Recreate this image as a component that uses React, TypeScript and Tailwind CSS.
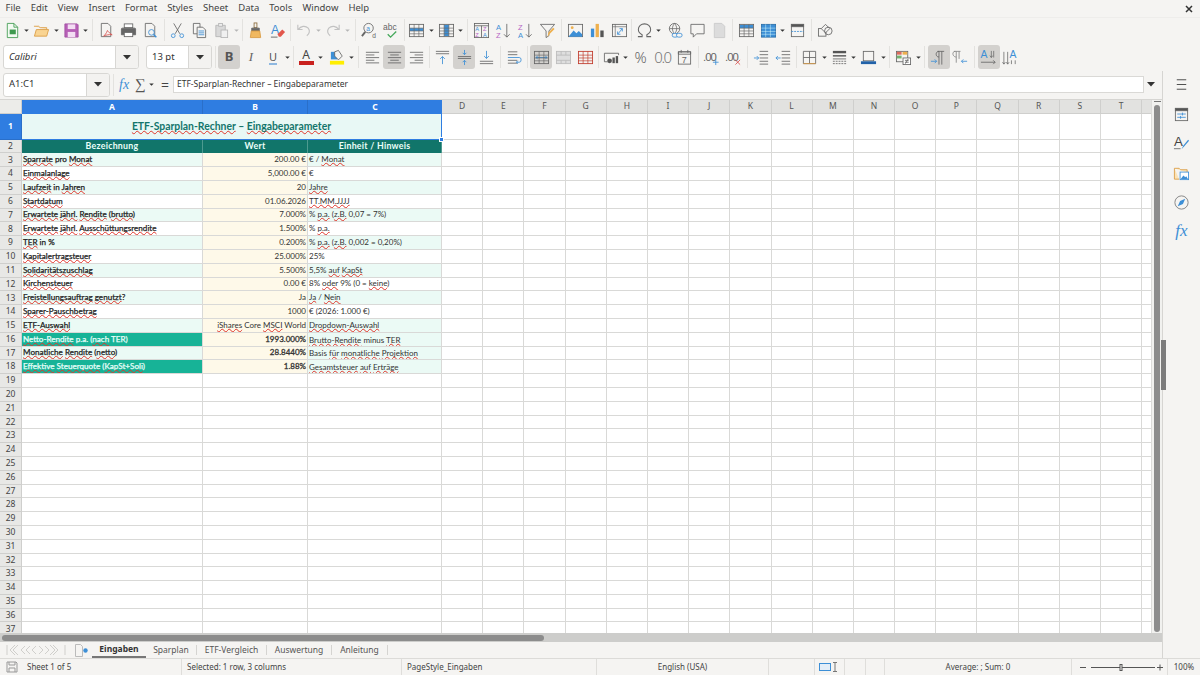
import type { ReactNode } from "react";

const BLUE = "#3d8fd6";
const GREY = "#666666";

function Ic({ children, size = 17 }: { children: ReactNode; size?: number }) {
  return (
    <svg width={size} height={size} viewBox="0 0 18 18" fill="none" stroke={GREY} strokeWidth="0.9">
      {children}
    </svg>
  );
}

function Btn({ children, active }: { children: ReactNode; active?: boolean }) {
  return (
    <div className={`flex h-[24px] w-[22px] shrink-0 items-center justify-center rounded-[3px] ${active ? "bg-[#d3d1ce]" : ""}`}>
      {children}
    </div>
  );
}

function Drop({ muted }: { muted?: boolean }) {
  return (
    <div className="flex h-[24px] w-[7.5px] shrink-0 items-center justify-center">
      <svg width="5" height="3" viewBox="0 0 6 4">
        <path d="M0 0.5h6L3 3.5z" fill={muted ? "#b5b5b5" : "#333"} />
      </svg>
    </div>
  );
}

function Sep({ w }: { w: string }) {
  return (
    <div className={`flex h-[22px] shrink-0 justify-center ${w}`}>
      <div className="h-full w-px bg-[#e3e2df]" />
    </div>
  );
}

function Combo({ text, w, italic }: { text: string; w: string; italic?: boolean }) {
  return (
    <div className={`flex h-[24px] shrink-0 overflow-hidden rounded-[3px] border border-[#d8d7d4] bg-white ${w}`}>
      <div className={`flex flex-1 items-center pl-[5px] text-[9.5px] text-[#333] ${italic ? "italic" : ""}`}>{text}</div>
      <div className="flex w-[23px] items-center justify-center border-l border-[#d8d7d4] bg-[#f3f2f0]">
        <svg width="8" height="5" viewBox="0 0 8 5">
          <path d="M0 0h8L4 4.5z" fill="#333" />
        </svg>
      </div>
    </div>
  );
}

const lines = (ys: number[], x1: number, x2: number, color = GREY) =>
  ys.map((y) => <path key={y} d={`M${x1} ${y}H${x2}`} stroke={color} />);

const Table = ({ fill, red }: { fill?: ReactNode; red?: boolean }) => {
  const c = red ? "#c0392b" : GREY;
  return (
    <Ic>
      {fill}
      <rect x="1.5" y="2.5" width="15" height="13" stroke={c} />
      <path d="M1.5 6.5h15M1.5 9.5h15M1.5 12.5h15M6.5 2.5v13M11.5 2.5v13" stroke={c} strokeWidth="0.7" />
    </Ic>
  );
};

const Toolbar1 = () => (
  <div className="flex h-[24px] items-center pl-[1px]">
    <Btn>
      <Ic>
        <path d="M3.5 1.5h7l4 4v11h-11z" stroke="#3e9a4e" fill="#f2faf2" />
        <path d="M10.5 1.5v4h4" stroke="#3e9a4e" />
        <rect x="6" y="8" width="6.5" height="5" fill="#3e9a4e" stroke="none" />
      </Ic>
    </Btn>
    <Drop />
    <Btn>
      <Ic>
        <path d="M1 4.500h5l1.500 1.500h7v2" stroke="#d99b42" fill="#fbe3b8" />
        <path d="M1.500 15l2-7h13l-2 7z" stroke="#d99b42" fill="#f9d492" />
      </Ic>
    </Btn>
    <Drop />
    <Btn>
      <Ic>
        <path d="M2 2h13l1 1v13H2z" fill="#b65fb6" stroke="#a04ea0" />
        <rect x="5" y="2.500" width="8" height="5" fill="#f3ddf3" stroke="none" />
        <rect x="5" y="10.500" width="8" height="5.500" fill="#f3ddf3" stroke="none" />
      </Ic>
    </Btn>
    <Drop />
    <Sep w="w-[6px]" />
    <Btn>
      <Ic>
        <path d="M3.500 1.500h7l3 3v11h-10z" />
        <path d="M10 9c-1 3-3 5-4 6 2-1 5-2 9-1.500-2-1-4-3-5-4.500z" stroke="#d9534f" />
      </Ic>
    </Btn>
    <Btn>
      <Ic>
        <rect x="4.500" y="2" width="9" height="4" fill="#fff" />
        <path d="M1.500 7.500q0-1 1-1h13q1 0 1 1v6h-15z" fill="#666" stroke="#666" />
        <rect x="4.500" y="11" width="9" height="4.500" fill="#fff" />
      </Ic>
    </Btn>
    <Btn>
      <Ic>
        <path d="M3.500 1.500h7l3 3v11h-10z" />
        <circle cx="10" cy="11" r="3" stroke={BLUE} />
        <path d="M12.200 13.200l3 3" stroke={BLUE} strokeWidth="1.500" />
      </Ic>
    </Btn>
    <Sep w="w-[5px]" />
    <Btn>
      <Ic>
        <path d="M5 1.500l6.500 11M13 1.500l-6.500 11" />
        <circle cx="4.500" cy="14.500" r="2" stroke={BLUE} />
        <circle cx="13.500" cy="14.500" r="2" stroke={BLUE} />
      </Ic>
    </Btn>
    <Btn>
      <Ic>
        <path d="M2.500 1.500h7v11h-7z" />
        <path d="M6.500 5.500h6l3 3v8h-9z" fill="#f5f4f2" />
        {lines([9.500, 11.500, 13.500], 8, 14, BLUE)}
      </Ic>
    </Btn>
    <Btn>
      <Ic>
        <path d="M3 3.500h10v12H3z" stroke="#b5b5b5" fill="#d9d9d9" />
        <rect x="6" y="1.500" width="4" height="3" stroke="#b5b5b5" fill="#eee" />
        <rect x="8.500" y="8.500" width="7" height="8" stroke="#b5b5b5" fill="#f0f0f0" />
      </Ic>
    </Btn>
    <Drop muted />
    <Sep w="w-[4.500px]" />
    <Btn>
      <Ic>
        <rect x="7.500" y="1" width="3" height="5" stroke="#8a6a3a" />
        <path d="M5 6.500h8v3H5z" fill="#666" stroke="#666" />
        <path d="M4.500 9.500h9l1 7h-11z" fill="#f0b860" stroke="#d99b42" />
      </Ic>
    </Btn>
    <Btn>
      <Ic>
        <text x="2" y="12.500" fontSize="13" fontFamily="Liberation Sans" fill={BLUE} stroke="none">A</text>
        <path d="M9 13l5-5 3 2.500-4.500 5h-2z" fill="#e2574c" stroke="none" />
        <path d="M2 16h7" stroke="#555" />
      </Ic>
    </Btn>
    <Sep w="w-[4px]" />
    <Btn>
      <Ic>
        <path d="M3 3v5h5M3.500 8C6 4 11 3.500 14 6.500c2 2.500 1.500 6-1.500 8" stroke="#c2c2c2" strokeWidth="1.200" />
      </Ic>
    </Btn>
    <Drop muted />
    <Btn>
      <Ic>
        <path d="M15 3v5h-5M14.500 8C12 4 7 3.500 4 6.500c-2 2.500-1.500 6 1.500 8" stroke="#c2c2c2" strokeWidth="1.200" />
      </Ic>
    </Btn>
    <Drop muted />
    <Sep w="w-[7px]" />
    <Btn>
      <Ic>
        <circle cx="8" cy="6.500" r="5" />
        <path d="M4.500 10.500L1 15" strokeWidth="2" />
        <text x="5.500" y="9" fontSize="7" fontFamily="Liberation Sans" fill={BLUE} stroke="none">a</text>
        <text x="12" y="16.500" fontSize="7" fontFamily="Liberation Sans" fill={GREY} stroke="none">d</text>
      </Ic>
    </Btn>
    <Btn>
      <Ic>
        <text x="0" y="8.500" fontSize="9" fontFamily="Liberation Sans" fill={GREY} stroke="none">abc</text>
        <path d="M5 13l3 3 6-6" stroke="#45a85a" strokeWidth="1.400" />
      </Ic>
    </Btn>
    <Sep w="w-[3px]" />
    <Btn>
      <Table fill={<rect x="2" y="6.500" width="14" height="3" fill={BLUE} stroke="none" />} />
    </Btn>
    <Drop />
    <Btn>
      <Table fill={<rect x="6.500" y="3" width="5" height="12" fill={BLUE} stroke="none" />} />
    </Btn>
    <Drop />
    <Sep w="w-[5.500px]" />
    <Btn>
      <Ic>
        <rect x="1.500" y="1.500" width="15" height="15" />
        <path d="M1.500 4h15M9 4v12.500" />
        <text x="2.500" y="10" fontSize="6" fontFamily="Liberation Sans" fill={BLUE} stroke="none">A</text>
        <text x="2.500" y="16" fontSize="6" fontFamily="Liberation Sans" fill="#b565c5" stroke="none">Z</text>
        <text x="10.500" y="10" fontSize="6" fontFamily="Liberation Sans" fill="#b565c5" stroke="none">Z</text>
        <text x="10.500" y="16" fontSize="6" fontFamily="Liberation Sans" fill={BLUE} stroke="none">A</text>
      </Ic>
    </Btn>
    <Btn>
      <Ic>
        <text x="1" y="8" fontSize="8" fontFamily="Liberation Sans" fill={BLUE} stroke="none">A</text>
        <text x="1" y="16.500" fontSize="8" fontFamily="Liberation Sans" fill="#b565c5" stroke="none">Z</text>
        <path d="M12.500 2v14M9.500 13l3 3 3-3" />
      </Ic>
    </Btn>
    <Btn>
      <Ic>
        <text x="1" y="8" fontSize="8" fontFamily="Liberation Sans" fill="#b565c5" stroke="none">Z</text>
        <text x="1" y="16.500" fontSize="8" fontFamily="Liberation Sans" fill={BLUE} stroke="none">A</text>
        <path d="M12.500 2v14M9.500 13l3 3 3-3" />
      </Ic>
    </Btn>
    <Btn>
      <Ic>
        <path d="M1.500 2.500h15l-6 7v5l-3 2v-7z" />
        <path d="M9 16l1-5 5-5 1.500 1.500-5 5z" fill="#eeb04e" stroke="none" />
      </Ic>
    </Btn>
    <Sep w="w-[6px]" />
    <Btn>
      <Ic>
        <rect x="1.500" y="2.500" width="15" height="13" />
        <circle cx="5.500" cy="6" r="1.500" fill="#eeb04e" stroke="none" />
        <path d="M2 15l5-6 3 3 2.500-2.500L16 13v2.500H2z" fill={BLUE} stroke="none" />
      </Ic>
    </Btn>
    <Btn>
      <Ic>
        <rect x="2" y="7" width="3.500" height="9" fill={BLUE} stroke="none" />
        <rect x="7" y="2" width="3.500" height="14" fill="#eeb04e" stroke="none" />
        <rect x="12" y="9" width="3.500" height="7" fill="#555" stroke="none" />
      </Ic>
    </Btn>
    <Btn>
      <Ic>
        <rect x="1.500" y="2.500" width="15" height="13" />
        <path d="M1.500 5h15M4.500 2.500v13" strokeWidth="0.700" />
        <path d="M7 13l5-6M12 10V7H9M7 10v3h3" stroke={BLUE} />
      </Ic>
    </Btn>
    <Sep w="w-[3px]" />
    <Btn>
      <Ic>
        <path d="M2 15.500h4.500v-2C3.500 12 2.500 9.500 2.500 8c0-3.500 3-6 6.500-6s6.500 2.500 6.500 6c0 1.500-1 4-4 5.500v2H16" strokeWidth="1.100" />
      </Ic>
    </Btn>
    <Drop />
    <div className="w-[1.500px] shrink-0" />
    <Btn>
      <Ic>
        <circle cx="8" cy="7" r="5.500" />
        <path d="M2.500 7h11M8 1.500c-3 3.500-3 7.500 0 11M8 1.500c3 3.500 3 7.500 0 11" strokeWidth="0.800" />
        <rect x="5.500" y="12" width="6" height="4" rx="2" stroke={BLUE} fill="#f5f4f2" />
        <rect x="10" y="12" width="6" height="4" rx="2" stroke={BLUE} fill="#f5f4f2" />
      </Ic>
    </Btn>
    <Btn>
      <Ic>
        <path d="M2 2.500h14v10H8l-3.500 3.500v-3.500H2z" />
      </Ic>
    </Btn>
    <Btn>
      <Ic>
        <path d="M3.500 1.500h8l3 3v12h-11z" fill="#dcdcdc" stroke="#c9c9c9" />
      </Ic>
    </Btn>
    <Sep w="w-[5px]" />
    <Btn>
      <Table fill={<rect x="2" y="3" width="14" height="3.500" fill={BLUE} stroke="none" />} />
    </Btn>
    <Btn>
      <Ic>
        <rect x="1.500" y="2.500" width="15" height="13.500" fill={BLUE} stroke="#2c6fa8" />
        <path d="M1.500 6.500h15M1.500 10h15M1.500 13h15M6 2.500v13.500M11 2.500v13.500" stroke="#dff" strokeWidth="0.500" />
      </Ic>
    </Btn>
    <Drop />
    <Btn>
      <Ic>
        <rect x="2.500" y="2.500" width="13" height="13" />
        <rect x="2.500" y="2.500" width="13" height="2.500" fill="#555" />
        <path d="M2.500 10h13" stroke={BLUE} strokeDasharray="2 1" />
      </Ic>
    </Btn>
    <Sep w="w-[5.500px]" />
    <Btn>
      <Ic>
        <rect x="1.500" y="7" width="8" height="8" />
        <path d="M9 2.500l4.500 4.500-4.500 4.500-4.500-4.500z" fill="#f5f4f2" />
        <circle cx="12" cy="9.500" r="4" fill="none" />
      </Ic>
    </Btn>
  </div>
);

const AlignIcon = ({ w }: { w: "l" | "c" | "r" }) => {
  const rows = [14, 9, 14, 9, 14];
  return (
    <Ic>
      {rows.map((len, i) => {
        const x = w === "l" ? 2 : w === "c" ? 9 - len / 2 : 16 - len;
        return <path key={i} d={`M${x} ${3.500 + i * 2.800}h${len}`} />;
      })}
    </Ic>
  );
};

const Toolbar2 = () => (
  <div className="mt-[3px] flex h-[24px] items-center pl-[3px]">
    <Combo text="Calibri" w="w-[136px]" italic />
    <div className="w-[7px] shrink-0" />
    <Combo text="13 pt" w="w-[66px]" />
    <Sep w="w-[6px]" />
    <Btn active>
      <span className="text-[13px] font-bold text-[#555]">B</span>
    </Btn>
    <Btn>
      <span className="font-['Liberation_Serif',serif] text-[13px] italic text-[#666]">I</span>
    </Btn>
    <Btn>
      <span className="border-b-2 border-[#8fb8e0] text-[11px] leading-[13px] text-[#555]">U</span>
    </Btn>
    <Drop />
    <Sep w="w-[3.500px]" />
    <Btn>
      <div className="flex flex-col items-center">
        <span className="text-[12px] leading-[12px] text-[#444]">A</span>
        <div className="h-[4px] w-[15px] bg-[#c9211e]" />
      </div>
    </Btn>
    <Drop />
    <div className="w-[1.500px] shrink-0" />
    <Btn>
      <Ic>
        <path d="M2 3h7v8H2z" fill={BLUE} stroke="none" />
        <path d="M6 3l4-1.500 4 6-4 4-4-4z" fill="#f5f4f2" />
        <rect x="1" y="12.500" width="15" height="4" fill="#ffee00" stroke="none" />
      </Ic>
    </Btn>
    <Drop />
    <Sep w="w-[5.500px]" />
    <Btn><AlignIcon w="l" /></Btn>
    <Btn active><AlignIcon w="c" /></Btn>
    <Btn><AlignIcon w="r" /></Btn>
    <Sep w="w-[4px]" />
    <Btn>
      <Ic>
        {lines([2.500, 5], 2, 16)}
        <path d="M9 16V8M6.500 10.500L9 8l2.500 2.500" stroke={BLUE} />
      </Ic>
    </Btn>
    <Btn active>
      <Ic>
        {lines([8, 10], 2, 16)}
        <path d="M9 1v5M7 4l2 2 2-2M9 17v-5M7 14l2-2 2 2" stroke={BLUE} />
      </Ic>
    </Btn>
    <Btn>
      <Ic>
        {lines([13, 15.500], 2, 16)}
        <path d="M9 2v8M6.500 7.500L9 10l2.500-2.500" stroke={BLUE} />
      </Ic>
    </Btn>
    <Sep w="w-[6px]" />
    <Btn>
      <Ic>
        {lines([3, 6, 12, 15], 2, 12)}
        <path d="M2 9h12q2 0 2 2.500T14 14h-3M12.500 12.500L11 14l1.500 1.500" stroke={BLUE} />
      </Ic>
    </Btn>
    <Sep w="w-[5px]" />
    <Btn active>
      <Table fill={<path d="M3 9h12M3 9l2-1.500M3 9l2 1.500M15 9l-2-1.500M15 9l-2 1.500" stroke={BLUE} />} />
    </Btn>
    <Btn>
      <Ic>
        <rect x="1.500" y="2.500" width="15" height="13" stroke="#bcbcbc" fill="#dedede" />
        <path d="M1.500 6.500h15M1.500 12h15M6.500 2.500v4M11.500 2.500v4M6.500 12v3.500M11.500 12v3.500" stroke="#bcbcbc" />
      </Ic>
    </Btn>
    <Btn><Table red /></Btn>
    <Sep w="w-[4px]" />
    <Btn>
      <Ic>
        <path d="M1.500 4.500h15v2M1.500 4.500v9H5" />
        <circle cx="7" cy="12.500" r="2.500" fill="#555" stroke="none" />
        <rect x="10" y="9" width="2.500" height="6" fill="#555" stroke="none" />
        <rect x="13.500" y="7.500" width="2.500" height="7.500" fill="#555" stroke="none" />
      </Ic>
    </Btn>
    <Drop />
    <Btn>
      <span className="text-[15px] leading-none font-light text-[#666]">%</span>
    </Btn>
    <Btn>
      <span className="text-[15px] leading-none tracking-[-1.500px] font-light text-[#777]">0.0</span>
    </Btn>
    <Btn>
      <Ic>
        <rect x="2.500" y="3" width="13" height="13" />
        <path d="M2.500 3h13v2.500h-13zM5.500 1v3M12.500 1v3" />
        <text x="6" y="14.500" fontSize="9.500" fontFamily="Liberation Sans" fill={GREY} stroke="none">7</text>
      </Ic>
    </Btn>
    <Sep w="w-[5px]" />
    <Btn>
      <Ic>
        <text x="0" y="13" fontSize="12" fontFamily="Liberation Sans" letterSpacing="-1" fill={GREY} stroke="none">.00</text>
        <path d="M13.500 11v6M10.500 14h6" stroke={BLUE} />
      </Ic>
    </Btn>
    <Btn>
      <Ic>
        <text x="0" y="13" fontSize="12" fontFamily="Liberation Sans" letterSpacing="-1" fill={GREY} stroke="none">.00</text>
        <path d="M11 11.500l5 5M16 11.500l-5 5" stroke="#d9534f" />
      </Ic>
    </Btn>
    <Sep w="w-[6px]" />
    <Btn>
      <Ic>
        {lines([2.500, 6, 9.500, 13, 16], 7, 16)}
        <path d="M1 9.500h5M4 7.500l2 2-2 2" stroke={BLUE} />
      </Ic>
    </Btn>
    <Btn>
      <Ic>
        {lines([2.500, 6, 9.500, 13, 16], 7, 16)}
        <path d="M1 9.500h5M3 7.500l-2 2 2 2" stroke={BLUE} />
      </Ic>
    </Btn>
    <Sep w="w-[4px]" />
    <Btn>
      <Ic>
        <path d="M2.500 2.500h13v13h-13zM9 2.500v13M2.500 9h13" />
        <path d="M2.500 15.500h13" stroke="#d99b42" />
      </Ic>
    </Btn>
    <Drop />
    <Btn>
      <Ic>
        <rect x="2" y="2" width="14" height="2.500" fill="#555" stroke="none" />
        <rect x="2" y="6.500" width="14" height="1.500" fill="#555" stroke="none" />
        {lines([10.500], 2, 16)}
        <path d="M2 13h14M2 15.500h14" strokeDasharray="2 1" />
      </Ic>
    </Btn>
    <Drop />
    <Btn>
      <Ic>
        <rect x="3.500" y="2.500" width="11" height="10" />
        <rect x="1" y="13" width="16" height="3" fill="#2262a8" stroke="none" />
      </Ic>
    </Btn>
    <Drop />
    <Sep w="w-[5.500px]" />
    <Btn>
      <Ic>
        <rect x="1.500" y="2.500" width="12" height="11" />
        <rect x="2" y="3" width="5" height="3" fill="#dd6b5c" stroke="none" />
        <rect x="2" y="7" width="5" height="3" fill="#74b26f" stroke="none" />
        <rect x="8" y="3" width="5" height="3" fill="#eeb04e" stroke="none" />
        <rect x="8.500" y="9.500" width="8" height="7" fill="#fff" />
        <path d="M10.500 12h4M10.500 14h4M11 15.500l3-5" />
      </Ic>
    </Btn>
    <Drop />
    <Sep w="w-[5.500px]" />
    <Btn active>
      <Ic>
        <path d="M8 2.500h7M9.500 2.500v14M12.500 2.500v14M9.500 2.500c-4 0-4 6 0 6" />
        <path d="M1 13h6M5 11l2 2-2 2" stroke={BLUE} />
      </Ic>
    </Btn>
    <Btn>
      <Ic>
        <path d="M2 2.500h7M3.500 2.500c-4 0-3 6 1 6M4.500 2.500v12M7.500 2.500v8" stroke="#888" />
        <path d="M16 13h-6M12 11l-2 2 2 2" stroke={BLUE} />
      </Ic>
    </Btn>
    <Sep w="w-[6px]" />
    <Btn active>
      <Ic>
        <text x="0.500" y="10" fontSize="11" fontFamily="Liberation Sans" fill={BLUE} stroke="none">A</text>
        <path d="M12 2v7M14.500 2v7M10.500 7l1.500 2 1.500-2" strokeWidth="0.800" />
        <path d="M1 14h15M14 12l2 2-2 2" />
      </Ic>
    </Btn>
    <Btn>
      <Ic>
        <text x="8" y="10" fontSize="11" fontFamily="Liberation Sans" fill={BLUE} stroke="none">A</text>
        <path d="M2 3v13M6 3v13M10 12v4M14 12v4M0.500 14l1.500 2 1.500-2M4.500 14L6 16l1.500-2" strokeWidth="0.800" />
      </Ic>
    </Btn>
  </div>
);

const FormulaBar = () => (
  <div className="flex h-[29px] shrink-0 items-center border-b border-[#d6d5d2] pb-[1px] pl-[3px]">
    <Combo text="A1:C1" w="w-[107px]" />
    <Sep w="w-[6px]" />
    <span className="ml-[3px] w-[14px] font-['Liberation_Serif',serif] text-[14px] italic leading-none text-[#3d8fd6]">
      fx
    </span>
    <span className="w-[14px] text-center font-['Liberation_Serif',serif] text-[15px] leading-none text-[#555]">∑</span>
    <div className="ml-[1px] w-[9px]">
      <Drop />
    </div>
    <span className="ml-[1px] w-[14px] text-center text-[14px] leading-none text-[#444]">=</span>
    <div className="ml-[1px] flex h-[17px] w-[971px] items-center border border-[#dad9d6] bg-white pl-[3px] text-[8.500px] text-[#333]">
      ETF-Sparplan-Rechner – Eingabeparameter
    </div>
    <div className="flex w-[14px] justify-center">
      <svg width="8" height="5" viewBox="0 0 8 5">
        <path d="M0 0h8L4 4.500z" fill="#333" />
      </svg>
    </div>
  </div>
);

// text between ~ gets the red spell check wave
function Spell({ text }: { text: string }) {
  const parts = text.split("~");
  return (
    <span className="whitespace-pre">
      {parts.map((p, i) =>
        i % 2 ? (
          <span key={i} className="underline decoration-[#e0352b] decoration-wavy decoration-[0.6px] underline-offset-[0px] [text-decoration-skip-ink:none]">
            {p}
          </span>
        ) : (
          <span key={i}>{p}</span>
        ),
      )}
    </span>
  );
}

const ROWS: [string, string, string][] = [
  ["~Sparrate~ pro ~Monat~", "200.00 €", "€ / ~Monat~"],
  ["~Einmalanlage~", "5,000.00 €", "€"],
  ["~Laufzeit~ in ~Jahren~", "20", "~Jahre~"],
  ["~Startdatum~", "01.06.2026", "~TT.MM.JJJJ~"],
  ["~Erwartete~ ~jährl.~ ~Rendite~ (~brutto~)", "7.000%", "% ~p.a.~ (~z.B.~ 0,07 = 7%)"],
  ["~Erwartete~ ~jährl.~ ~Ausschüttungsrendite~", "1.500%", "% ~p.a.~"],
  ["~TER~ in %", "0.200%", "% ~p.a.~ (~z.B.~ 0,002 = 0,20%)"],
  ["~Kapitalertragsteuer~", "25.000%", "25%"],
  ["~Solidaritätszuschlag~", "5.500%", "5,5% ~auf~ ~KapSt~"],
  ["~Kirchensteuer~", "0.00 €", "8% ~oder~ 9% (0 = ~keine~)"],
  ["~Freistellungsauftrag~ ~genutzt~?", "Ja", "~Ja~ / ~Nein~"],
  ["~Sparer-Pauschbetrag~", "1000", "€ (2026: 1.000 €)"],
  ["~ETF-Auswahl~", "~iShares~ Core ~MSCI~ World", "~Dropdown-Auswahl~"],
  ["~Netto-Rendite~ p.a. (~nach~ TER)", "1993.000%", "~Brutto-Rendite~ minus ~TER~"],
  ["~Monatliche~ ~Rendite~ (~netto~)", "28.8440%", "Basis ~für~ ~monatliche~ ~Projektion~"],
  ["~Effektive~ ~Steuerquote~ (~KapSt+Soli~)", "1.88%", "~Gesamtsteuer~ ~auf~ ~Erträge~"],
];

const EXTRA_COLS = ["D", "E", "F", "G", "H", "I", "J", "K", "L", "M", "N", "O", "P", "Q", "R", "S", "T"];
const LINE = "border-r border-b border-[#d9d9d7]";

const EmptyCols = () => (
  <>
    {EXTRA_COLS.map((c) => (
      <div key={c} className={`w-[41.200px] shrink-0 ${LINE}`} />
    ))}
    <div className="flex-1 border-b border-[#d9d9d7]" />
  </>
);

const RowHead = ({ n, active }: { n: number; active?: boolean }) => (
  <div
    className={`flex w-[22px] shrink-0 items-center justify-center border-r border-b font-['Noto_Sans',sans-serif] text-[8.500px] ${
      active ? "border-[#2a6fc9] bg-[#2f7de1] font-bold text-white" : "border-[#cfcfcd] bg-[#e8e8e6] text-[#444]"
    }`}
  >
    {n}
  </div>
);

function DataRow({ n, row }: { n: number; row: [string, string, string] }) {
  const mint = n % 2 === 1 || n >= 15;
  const strong = n === 16 || n === 18;
  const computed = n >= 16;
  return (
    <div className="flex h-[13.800px] shrink-0">
      <RowHead n={n} />
      <div
        className={`flex w-[181px] shrink-0 items-center overflow-hidden whitespace-nowrap pb-[1px] pl-[1px] text-[8.100px] [-webkit-text-stroke:0.25px] ${LINE} ${
          strong ? "bg-[#17b397] text-[#e8fffa]" : mint ? "bg-[#ebfaf5] text-[#222]" : "bg-white text-[#222]"
        }`}
      >
        <Spell text={row[0]} />
      </div>
      <div
        className={`flex w-[105px] shrink-0 items-center justify-end overflow-hidden whitespace-nowrap bg-[#fef9e9] pb-[1px] pr-[1px] text-[#333] ${LINE} ${
          computed ? "[-webkit-text-stroke:0.3px]" : ""
        }`}
      >
        <Spell text={row[1]} />
      </div>
      <div
        className={`flex w-[134px] shrink-0 items-center overflow-hidden whitespace-nowrap pl-[1px] text-[#333] ${LINE} ${
          computed ? "pt-[1px]" : "pb-[1px]"
        } ${mint ? "bg-[#ebfaf5]" : "bg-white"}`}
      >
        <Spell text={row[2]} />
      </div>
      <EmptyCols />
    </div>
  );
}

const Sheet = () => (
  <div className="flex min-h-0 flex-1">
    <div className="min-w-0 flex-1 overflow-hidden bg-white font-['Lato',sans-serif] text-[8px] leading-none">
      <div className="flex h-[13.600px] bg-[#e2e2e0] font-['Noto_Sans',sans-serif] text-[8.500px]">
        <div className="w-[22px] shrink-0 border-r border-b border-[#cfcfcd] bg-[#ecece9]" />
        <div className="flex w-[181px] shrink-0 items-center justify-center border-r border-[#2a6fc9] bg-[#2f7de1] font-bold text-white">A</div>
        <div className="flex w-[105px] shrink-0 items-center justify-center border-r border-[#2a6fc9] bg-[#2f7de1] font-bold text-white">B</div>
        <div className="flex w-[134px] shrink-0 items-center justify-center bg-[#2f7de1] font-bold text-white">C</div>
        {EXTRA_COLS.map((c) => (
          <div key={c} className="flex w-[41.200px] shrink-0 items-center justify-center border-r border-b border-[#cfcfcd] text-[#555]">
            {c}
          </div>
        ))}
        <div className="flex-1 border-b border-[#cfcfcd]" />
      </div>
      <div className="flex h-[26px]">
        <RowHead n={1} active />
        <div className="relative flex w-[420px] shrink-0 items-center justify-center border-r border-b border-[#2f7de1] bg-[#e8f8f5] text-[10.400px] font-bold text-[#13756b]">
          <Spell text="~ETF-Sparplan-Rechner~ – ~Eingabeparameter~" />
          <div className="absolute right-[-3px] bottom-[-3px] h-[5px] w-[5px] border border-white bg-[#2f7de1]" />
        </div>
        <EmptyCols />
      </div>
      <div className="flex h-[13.800px]">
        <RowHead n={2} />
        {[
          ["Bezeichnung", "w-[181px]"],
          ["Wert", "w-[105px]"],
          ["Einheit / Hinweis", "w-[134px]"],
        ].map(([t, w]) => (
          <div key={t} className={`flex shrink-0 items-center justify-center border-r border-[#4d9a90] bg-[#11756a] text-[8.800px] font-bold tracking-[0.25px] text-[#eafff9] ${w}`}>
            {t}
          </div>
        ))}
        <EmptyCols />
      </div>
      {ROWS.map((row, i) => (
        <DataRow key={i} n={i + 3} row={row} />
      ))}
      {Array.from({ length: 19 }, (_, i) => (
        <div key={i} className="flex h-[13.800px]">
          <RowHead n={i + 19} />
          <div className={`w-[181px] shrink-0 ${LINE}`} />
          <div className={`w-[105px] shrink-0 ${LINE}`} />
          <div className={`w-[134px] shrink-0 ${LINE}`} />
          <EmptyCols />
        </div>
      ))}
    </div>
    <div className="flex w-[11px] shrink-0 flex-col items-center border-l border-[#dcdcda] bg-[#f1f1ef] pt-[1px]">
      <div className="h-px w-[7px] bg-[#777]" />
      <div className="mt-[3px] mb-[1px] w-[6px] flex-1 rounded-full bg-[#8c8c8c]" />
    </div>
  </div>
);

const HScroll = () => (
  <div className="flex h-[9px] shrink-0 items-center bg-[#cdcdcb] pl-[2px] pr-[11px]">
    <div className="h-[6px] w-[542px] rounded-full bg-[#8c8c8c]" />
  </div>
);

const Tabs = () => (
  <div className="flex h-[16px] shrink-0 items-center text-[8.500px] text-[#555]">
    <div className="ml-[6px] flex w-[60px] items-center">
      <svg width="60" height="12" viewBox="0 0 60 12" fill="none" stroke="#d0cfcc">
        <path d="M1 1v10M9 1L4 6l5 5M12 1L7 6l5 5M19 2l-4 4 4 4M24 2l-4 4 4 4M30 2l-4 4 4 4M33 2l4 4-4 4M39 2l4 4-4 4M44 1l5 5-5 5M47 1l5 5-5 5M59 1v10" />
      </svg>
    </div>
    <div className="ml-[9px] flex w-[17px] items-center">
      <svg width="14" height="13" viewBox="0 0 14 13" fill="none">
        <path d="M0.500 0.500h5l2 2v10h-7z" stroke="#bbb" />
        <circle cx="10.500" cy="6.500" r="2.200" fill="#3d8fd6" />
      </svg>
    </div>
    <div className="flex h-full w-[54px] items-center justify-center border-b-2 border-[#777] font-bold text-[#333]">Eingaben</div>
    {[
      ["Sparplan", "w-[51px]"],
      ["ETF-Vergleich", "w-[70px]"],
      ["Auswertung", "w-[65px]"],
      ["Anleitung", "w-[56px]"],
    ].map(([t, w]) => (
      <div key={t} className={`flex h-[10px] items-center justify-center border-r border-[#d5d4d1] ${w}`}>
        {t}
      </div>
    ))}
  </div>
);

const Sidebar = () => (
  <div className="relative flex w-[38px] shrink-0 flex-col items-center gap-[12.500px] border-l border-[#d6d5d2] pt-[5px]">
    <div className="absolute left-[-2px] top-[269px] h-[50px] w-[5px] bg-[#7c7c7c]" />
    <Ic>
      {lines([4, 9, 14], 4, 14, "#333")}
    </Ic>
    <Ic>
      <rect x="2.500" y="2.500" width="13" height="13" />
      <rect x="2.500" y="2.500" width="13" height="2.500" fill="#555" />
      <path d="M4.500 8.500h9M4.500 12h9M10 7v3M8 10.500v3" stroke={BLUE} />
    </Ic>
    <Ic>
      <text x="1" y="12" fontSize="14" fontFamily="Liberation Sans" fill="#444" stroke="none">A</text>
      <path d="M1 14.500h7" />
      <path d="M9 15l2-4 5-6 1 1-5 6z" fill={BLUE} stroke="none" />
    </Ic>
    <Ic>
      <path d="M1.500 3.500h5l1.500 1.500h7v3M1.500 3.500V15h5" stroke="#d99b42" fill="#fbe3b8" />
      <rect x="7.500" y="7.500" width="9" height="8" fill="#fff" stroke={BLUE} />
      <path d="M8 15l3-4 2 2 1-1 2 3z" fill={BLUE} stroke="none" />
    </Ic>
    <Ic>
      <circle cx="9" cy="9" r="7" stroke="#777" />
      <path d="M13 5l-2.500 5.500L5 13l2.500-5.500z" fill={BLUE} stroke="none" />
    </Ic>
    <span className="mt-[-2px] font-['Liberation_Serif',serif] text-[17px] italic leading-[18px] text-[#3d8fd6]">fx</span>
  </div>
);

const StatusCell = ({ w, children, center }: { w: string; children?: ReactNode; center?: boolean }) => (
  <div className={`flex h-full shrink-0 items-center border-r border-[#dfdedb] ${w} ${center ? "justify-center" : "pl-[5px]"}`}>
    {children}
  </div>
);

const StatusBar = () => (
  <div className="flex h-[17px] shrink-0 items-center border-t border-[#dcdbd8] text-[8px] text-[#444]">
    <div className="flex h-full w-[182px] shrink-0 items-center gap-[9px] border-r border-[#dfdedb] pl-[6px]">
      <svg width="12" height="12" viewBox="0 0 12 12" fill="none" stroke="#999">
        <path d="M1 1h9l1 1v9H1zM3 1v3h6V1M3 11V7h6v4" />
      </svg>
      Sheet 1 of 5
    </div>
    <StatusCell w="w-[220px]">Selected: 1 row, 3 columns</StatusCell>
    <StatusCell w="w-[195px]">PageStyle_Eingaben</StatusCell>
    <StatusCell w="w-[172px]" center>English (USA)</StatusCell>
    <StatusCell w="w-[45.500px]" />
    <div className="flex h-full w-[30.500px] shrink-0 items-center justify-center border-r border-[#dfdedb]">
      <svg width="22" height="10" viewBox="0 0 22 10" fill="none">
        <rect x="1.500" y="1.500" width="11" height="7" stroke="#3d8fd6" fill="#e4eef8" />
        <path d="M15 0.500h4M17 0.500v9M15 9.500h4" stroke="#777" />
      </svg>
    </div>
    <StatusCell w="w-[21px]" />
    <StatusCell w="w-[19px]" />
    <StatusCell w="w-[187px]" center>Average: ; Sum: 0</StatusCell>
    <div className="flex h-full w-[96px] shrink-0 items-center border-r border-[#dfdedb] pl-[7px]">
      <svg width="86" height="11" viewBox="0 0 86 11" fill="none" stroke="#555">
        <path d="M1 5.500h6M12 5.500h64M78 5.500h6M81 2.500v6" />
        <rect x="41" y="2.500" width="2" height="6" fill="#f5f4f2" />
      </svg>
    </div>
    <div className="flex-1 text-center">100%</div>
  </div>
);

const MENU = ["File", "Edit", "View", "Insert", "Format", "Styles", "Sheet", "Data", "Tools", "Window", "Help"];

export default function App() {
  return (
    <div className="flex h-[675px] w-[1200px] flex-col overflow-hidden bg-[#f5f4f2] font-['Noto_Sans',sans-serif]">
      <div className="flex h-[18px] shrink-0 items-center justify-between border-b border-[#eeedeb] pl-[5.500px] pr-[6px] text-[9.500px] text-[#444]">
        <div className="flex gap-[10px]">
          {MENU.map((m) => (
            <span key={m}>{m}</span>
          ))}
        </div>
        <svg width="10" height="10" viewBox="0 0 10 10" stroke="#333" strokeWidth="1.500">
          <path d="M2 2l6 6M8 2l-6 6" />
        </svg>
      </div>
      <Toolbar1 />
      <Toolbar2 />
      <div className="flex min-h-0 flex-1 pt-[2px]">
        <div className="flex min-w-0 flex-1 flex-col">
          <FormulaBar />
          <Sheet />
          <HScroll />
          <Tabs />
        </div>
        <Sidebar />
      </div>
      <StatusBar />
    </div>
  );
}
